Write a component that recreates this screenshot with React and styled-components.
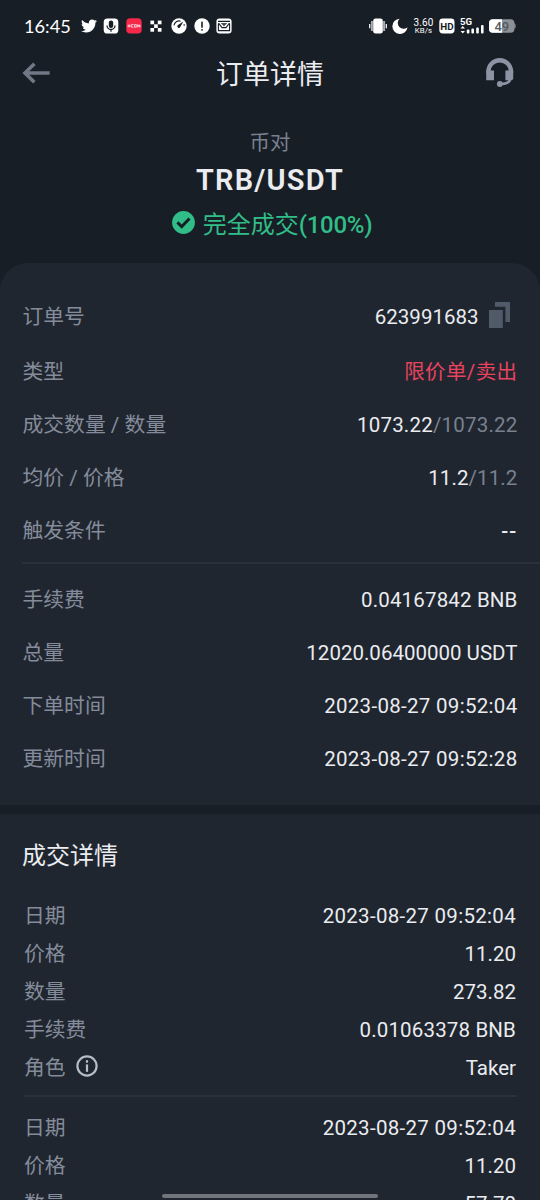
import React from 'react';
import styled, { createGlobalStyle } from 'styled-components';
import { FaTwitter } from 'react-icons/fa';

const GlobalStyle = createGlobalStyle`
    * {
        box-sizing: border-box;
    }
    body {
        margin: 0;
        background-color: #181e26;
        font-family: Roboto, 'Noto Sans CJK SC', sans-serif;
    }
`;

const Screen = styled.div`
    position: relative;
    width: 540px;
    height: 1200px;
    overflow: hidden;
    display: flex;
    flex-direction: column;
    background-color: #181e26;
    color: #eaecef;
`;

const StatusBar = styled.div`
    flex: none;
    height: 51px;
    padding: 0 24px;
    display: flex;
    align-items: center;
    justify-content: space-between;
    color: #fff;
`;

const StatusGroup = styled.div`
    display: flex;
    align-items: center;
    gap: ${(props) => props.$gap}px;
    svg {
        display: block;
        flex: none;
    }
`;

const Clock = styled.span`
    width: 50px;
    font-family: Lato, sans-serif;
    font-size: 18.2px;
    line-height: 20px;
`;

const NetSpeed = styled.div`
    width: 21px;
    font-size: 10px;
    font-weight: 400;
    line-height: 9px;
    letter-spacing: 0.1px;
    text-align: center;
    white-space: nowrap;
`;

const Unit = styled.div`
    font-size: 7.8px;
    line-height: 7px;
`;

const Header = styled.header`
    flex: none;
    height: 44px;
    padding: 0 26px 0 22px;
    display: flex;
    align-items: center;
    justify-content: space-between;
    svg {
        display: block;
    }
`;

const Title = styled.h1`
    margin: 0;
    padding: 4px 0 0 4px;
    font-size: 27px;
    font-weight: 400;
    line-height: 40px;
`;

const Summary = styled.section`
    flex: none;
    height: 168px;
    padding-top: 34px;
    display: flex;
    flex-direction: column;
    align-items: center;
`;

const PairLabel = styled.div`
    font-size: 20.5px;
    line-height: 28px;
    color: #79818f;
`;

const PairName = styled.div`
    margin-top: 3px;
    font-size: 29px;
    font-weight: 600;
    line-height: 40px;
    letter-spacing: 1.2px;
`;

const OrderState = styled.div`
    margin-top: 7px;
    padding-left: 4px;
    display: flex;
    align-items: center;
    gap: 8px;
    font-size: 24px;
    line-height: 36px;
    color: #31bd87;
    svg {
        display: block;
        margin-top: -6px;
    }
`;

const Percent = styled.span`
    font-weight: 500;
    letter-spacing: -0.3px;
`;

const Card = styled.section`
    flex: none;
    height: 542px;
    padding-top: 26px;
    border-radius: 28px 28px 0 0;
    background-color: #20262f;
`;

const Row = styled.div`
    height: ${(props) => props.$height || 53}px;
    padding: 0 22.5px;
    display: flex;
    align-items: center;
    justify-content: space-between;
    font-size: 20.8px;
    white-space: nowrap;
`;

const Label = styled.span`
    display: flex;
    align-items: center;
    gap: 10px;
    line-height: 30px;
    color: #848c9b;
    svg {
        display: block;
        margin-top: -4px;
    }
`;

const Value = styled.span`
    display: flex;
    align-items: center;
    line-height: 30px;
    font-size: 20.5px;
    font-weight: ${(props) => props.$weight || 400};
    letter-spacing: ${(props) => props.$spacing || 0}px;
    color: ${(props) => props.$color || '#eaecef'};
    svg {
        display: block;
        margin: -4px 7px 0 10px;
    }
`;

const Muted = styled.span`
    color: #79818f;
`;

const Divider = styled.div`
    height: 2px;
    margin: ${(props) => props.$margin};
    background-color: #2a313b;
`;

const Fills = styled.section`
    flex: none;
    margin-top: 9px;
    height: 420px;
    padding-top: 22px;
    background-color: #20262f;
`;

const FillsTitle = styled.h2`
    margin: 0 0 21px;
    padding-left: 22px;
    font-size: 24px;
    font-weight: 400;
    line-height: 40px;
`;

const FillRow = styled(Row)`
    height: 38px;
    padding: 0 24px;
`;

const HomeIndicator = styled.div`
    position: absolute;
    left: 162px;
    bottom: 2px;
    width: 216px;
    height: 4px;
    border-radius: 2px;
    background-color: #70757c;
`;

const MicIcon = () => (
    <svg width="16" height="16" viewBox="0 0 16 16">
        <rect x="0.7" y="0.5" width="14.6" height="15" rx="3.6" fill="#fff" />
        <rect x="5.8" y="2.4" width="4.4" height="7.6" rx="2.2" fill="#181e26" />
        <path d="M4 7.5a4 4 0 0 0 8 0M8 11.5v2.3" fill="none" stroke="#181e26" strokeWidth="1.3" />
    </svg>
);

const RedAppIcon = () => (
    <svg width="16" height="16" viewBox="0 0 16 16">
        <rect x="0.3" y="0.3" width="15.4" height="15.2" rx="3.8" fill="#f5284a" />
        <path
            d="M2.2 6.6v2.6M3.8 6.4v3M2 8h2.4M7.6 6.6H5.6v2.6h2M8.6 6.6h1.6v2.6H8.6zM11.2 6.2v3.2M11 7.8h3M13 6.4v3M14 6.8v2.4"
            fill="none"
            stroke="#ffd5db"
            strokeWidth="0.9"
        />
    </svg>
);

const OkxIcon = () => (
    <svg width="16" height="16" viewBox="0 0 16 16" fill="#fff">
        <rect x="2.4" y="2.6" width="3.7" height="3.7" />
        <rect x="9.8" y="2.6" width="3.7" height="3.7" />
        <rect x="6.1" y="6.3" width="3.7" height="3.7" />
        <rect x="2.4" y="10" width="3.7" height="3.7" />
        <rect x="9.8" y="10" width="3.7" height="3.7" />
    </svg>
);

const GaugeIcon = () => (
    <svg width="16" height="16" viewBox="0 0 16 16">
        <circle cx="8" cy="8" r="7.7" fill="#fff" />
        <path d="M3 7.4a5 5 0 0 1 6.6-4.2M13 6.2a5 5 0 0 1 0.2 1.6" fill="none" stroke="#181e26" strokeWidth="1.1" />
        <path d="M12.4 3.6L9.2 9a1.5 1.5 0 1 1-2.2-1.9z" fill="#181e26" />
    </svg>
);

const AlertIcon = () => (
    <svg width="16" height="16" viewBox="0 0 16 16">
        <circle cx="8" cy="8" r="7.7" fill="#fff" />
        <rect x="7.2" y="3.4" width="1.6" height="6.4" rx="0.6" fill="#181e26" />
        <rect x="7.2" y="11" width="1.6" height="1.7" rx="0.6" fill="#181e26" />
    </svg>
);

const MailIcon = () => (
    <svg width="16" height="16" viewBox="0 0 16 16">
        <rect x="0.4" y="0.5" width="15.2" height="15" rx="3.2" fill="#fff" />
        <path d="M2.4 5.4v7.2h11.2V5.4" fill="none" stroke="#181e26" strokeWidth="1.1" />
        <path d="M2 3.4h12M2.6 5.2L6 9.6h4l3.4-4.4" fill="none" stroke="#181e26" strokeWidth="1.1" />
        <path d="M4.8 4.9h6.4L8 8.4z" fill="#4b5057" />
    </svg>
);

const VibrateIcon = () => (
    <svg width="18" height="16" viewBox="0 0 18 16">
        <rect x="4.2" y="0.4" width="9.6" height="15.2" rx="2.4" fill="#fff" />
        <path d="M2.9 3v10M15.1 3v10" stroke="#a9adb2" strokeWidth="2" />
        <path d="M0.7 6v4.2M17.3 6v4.2" stroke="#fff" strokeWidth="1.2" />
    </svg>
);

const MoonIcon = () => (
    <svg width="16" height="16" viewBox="0 0 16 16">
        <path d="M7.6 0.7A7.6 7.6 0 1 0 15.5 9.2A5 5 0 0 1 7.6 0.7z" fill="#fff" />
    </svg>
);

const HdIcon = () => (
    <svg width="16" height="16" viewBox="0 0 16 16">
        <rect x="0.3" y="0.5" width="15.2" height="15" rx="3.4" fill="#fff" />
        <text x="7.9" y="11.5" textAnchor="middle" fontFamily="Roboto" fontWeight="700" fontSize="9.8" fill="#181e26">
            HD
        </text>
    </svg>
);

const SignalIcon = () => (
    <svg width="24" height="18" viewBox="0 0 24 18" fill="#fff">
        <text x="0" y="8.2" fontFamily="Roboto" fontWeight="700" fontSize="9.6">
            5G
        </text>
        <path d="M2.7 9L5 11.6H0.6zM2.7 16.6L5 14H0.6z" />
        <rect x="6.8" y="12.6" width="2.6" height="3.8" rx="1" />
        <rect x="11.4" y="11.6" width="2.6" height="4.8" rx="1" />
        <rect x="16.2" y="10.4" width="2.6" height="6" rx="1" />
        <rect x="21" y="8" width="2.6" height="8.4" rx="1" />
    </svg>
);

const BatteryIcon = () => (
    <svg width="27" height="14" viewBox="0 0 27 14">
        <rect x="0" y="0.2" width="25.4" height="13.6" rx="3.8" fill="#8d9195" />
        <path d="M3.8 0.2H13v13.6H3.8A3.8 3.8 0 0 1 0 10V4A3.8 3.8 0 0 1 3.8 0.2z" fill="#fff" />
        <path d="M25.2 4c2 0.8 2 5.2 0 6z" fill="#8d9195" />
        <text x="12.8" y="11.6" textAnchor="middle" fontFamily="Roboto" fontWeight="500" fontSize="13" fill="#565a5f">
            49
        </text>
    </svg>
);

const BackIcon = () => (
    <svg width="28" height="22" viewBox="0 0 28 22">
        <path d="M27.6 11H3.4M12.4 1.8L3 11l9.4 9.2" fill="none" stroke="#707887" strokeWidth="3.6" />
    </svg>
);

const HeadsetIcon = () => (
    <svg width="28" height="30" viewBox="0 0 28 30">
        <path d="M2.4 15v-1.5a11.3 11.3 0 0 1 22.6 0V15" fill="none" stroke="#8c94a3" strokeWidth="4.4" />
        <path d="M0.2 12.6h7.8v9.6H0.2zM19.4 12.6h7.8v8.6l-2 1h-5.8z" fill="#8c94a3" />
        <path d="M24.6 20.6c-0.8 2.8-3 4.6-6 5L14 26.2" fill="none" stroke="#8c94a3" strokeWidth="2.8" />
        <circle cx="13.8" cy="26" r="2.9" fill="#8c94a3" />
    </svg>
);

const CheckIcon = () => (
    <svg width="23" height="23" viewBox="0 0 23 23">
        <circle cx="11.5" cy="11.5" r="11.4" fill="#31bd87" />
        <path d="M5.4 11.4l4.3 4.2 7.8-8" fill="none" stroke="#181e26" strokeWidth="2.9" />
    </svg>
);

const CopyIcon = () => (
    <svg width="22" height="26" viewBox="0 0 22 26" fill="#505a69">
        <path d="M6 0h15v20h-4.6V4.8H6z" />
        <rect x="0" y="8" width="13.8" height="18" />
    </svg>
);

const InfoIcon = () => (
    <svg width="22" height="22" viewBox="0 0 22 22">
        <circle cx="11" cy="11" r="9.6" fill="none" stroke="#b7bdc6" strokeWidth="2.2" />
        <rect x="9.9" y="9.4" width="2.2" height="7.4" fill="#b7bdc6" />
        <rect x="9.9" y="5.2" width="2.2" height="2.5" fill="#b7bdc6" />
    </svg>
);

const feeRows = [
    { label: '手续费', value: '0.04167842 BNB', spacing: 0.15 },
    { label: '总量', value: '12020.06400000 USDT' },
    { label: '下单时间', value: '2023-08-27 09:52:04', spacing: 0.3 },
    { label: '更新时间', value: '2023-08-27 09:52:28', spacing: 0.3 },
];

const fills = [
    [
        { label: '日期', value: '2023-08-27 09:52:04', spacing: 0.3 },
        { label: '价格', value: '11.20' },
        { label: '数量', value: '273.82' },
        { label: '手续费', value: '0.01063378 BNB', spacing: 0.15 },
        { label: '角色', value: 'Taker', info: true },
    ],
    [
        { label: '日期', value: '2023-08-27 09:52:04', spacing: 0.3 },
        { label: '价格', value: '11.20' },
        { label: '数量', value: '57.70' },
    ],
];

const App = () => {
    return (
        <Screen>
            <GlobalStyle />
            <StatusBar>
                <StatusGroup $gap={6.6}>
                    <Clock>16:45</Clock>
                    <FaTwitter size={16} />
                    <MicIcon />
                    <RedAppIcon />
                    <OkxIcon />
                    <GaugeIcon />
                    <AlertIcon />
                    <MailIcon />
                </StatusGroup>
                <StatusGroup $gap={5}>
                    <VibrateIcon />
                    <MoonIcon />
                    <NetSpeed>
                        3.60
                        <Unit>KB/s</Unit>
                    </NetSpeed>
                    <HdIcon />
                    <SignalIcon />
                    <BatteryIcon />
                </StatusGroup>
            </StatusBar>
            <Header>
                <BackIcon />
                <Title>订单详情</Title>
                <HeadsetIcon />
            </Header>
            <Summary>
                <PairLabel>币对</PairLabel>
                <PairName>TRB/USDT</PairName>
                <OrderState>
                    <CheckIcon />
                    <span>
                        完全成交<Percent>(100%)</Percent>
                    </span>
                </OrderState>
            </Summary>
            <Card>
                <Row $height={56}>
                    <Label>订单号</Label>
                    <Value>
                        623991683
                        <CopyIcon />
                    </Value>
                </Row>
                <Row>
                    <Label>类型</Label>
                    <Value $color="#e8435f" $spacing={0.4}>限价单/卖出</Value>
                </Row>
                <Row>
                    <Label>成交数量 / 数量</Label>
                    <Value $spacing={0.2}>
                        1073.22
                        <Muted>/1073.22</Muted>
                    </Value>
                </Row>
                <Row>
                    <Label>均价 / 价格</Label>
                    <Value $spacing={0.1}>
                        11.2
                        <Muted>/11.2</Muted>
                    </Value>
                </Row>
                <Row>
                    <Label>触发条件</Label>
                    <Value $spacing={1.2} $weight={500}>--</Value>
                </Row>
                <Divider $margin="5px 0 9px 22px" />
                {feeRows.map((row) => (
                    <Row key={row.label}>
                        <Label>{row.label}</Label>
                        <Value $spacing={row.spacing}>{row.value}</Value>
                    </Row>
                ))}
            </Card>
            <Fills>
                <FillsTitle>成交详情</FillsTitle>
                {fills.map((fill, index) => (
                    <React.Fragment key={index}>
                        {index > 0 && <Divider $margin="8px 23px 12px 24px" />}
                        {fill.map((row) => (
                            <FillRow key={row.label}>
                                <Label>
                                    {row.label}
                                    {row.info && <InfoIcon />}
                                </Label>
                                <Value $spacing={row.spacing}>{row.value}</Value>
                            </FillRow>
                        ))}
                    </React.Fragment>
                ))}
            </Fills>
            <HomeIndicator />
        </Screen>
    );
};

export default App;
